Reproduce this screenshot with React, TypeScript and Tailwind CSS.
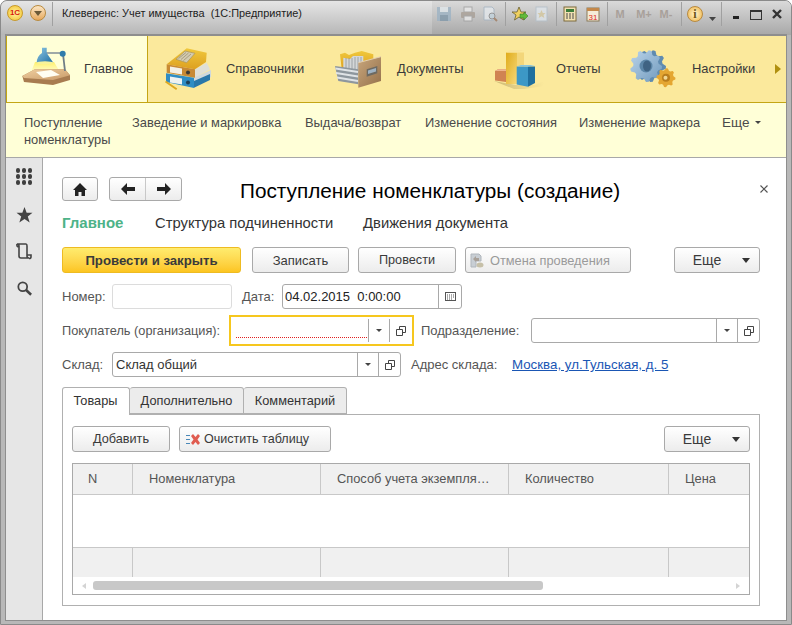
import React from "react";

const Gradients = () => (
  <svg width="0" height="0" className="absolute">
    <defs>
      <linearGradient id="wood" x1="0" y1="0" x2="1" y2="1"><stop offset="0" stopColor="#f0cfa0" /><stop offset="1" stopColor="#c89a68" /></linearGradient>
      <linearGradient id="blueg" x1="0" y1="0" x2="1" y2="1"><stop offset="0" stopColor="#8fc8e4" /><stop offset="1" stopColor="#1f6ea3" /></linearGradient>
      <linearGradient id="yellowg" x1="0" y1="0" x2="0" y2="1"><stop offset="0" stopColor="#f0c83c" /><stop offset="1" stopColor="#dda020" /></linearGradient>
      <linearGradient id="gold2" x1="0" y1="0" x2="1" y2="1"><stop offset="0" stopColor="#e0ac1c" /><stop offset="1" stopColor="#f6d878" /></linearGradient>
      <linearGradient id="steel" x1="0" y1="0" x2="1" y2="1"><stop offset="0" stopColor="#bcd5ea" /><stop offset="1" stopColor="#6f99bd" /></linearGradient>
      <linearGradient id="cone" x1="0" y1="0" x2="0" y2="1"><stop offset="0" stopColor="#ffef60" stopOpacity=".95" /><stop offset="1" stopColor="#fffbd0" stopOpacity=".4" /></linearGradient>
      <linearGradient id="cab" x1="0" y1="0" x2="1" y2="1"><stop offset="0" stopColor="#c8a67c" /><stop offset="1" stopColor="#94704a" /></linearGradient>
      <linearGradient id="shade" x1="0" y1="0" x2="1" y2="0"><stop offset="0" stopColor="#a08c50" stopOpacity=".5" /><stop offset="1" stopColor="#a08c50" stopOpacity="0" /></linearGradient>
    </defs>
  </svg>
);

const LampIcon = () => (
  <svg width="50" height="48" viewBox="0 0 50 48" className="shrink-0">
    <path d="M13 17H32L38 27L8 30Z" fill="url(#cone)" />
    <path d="M0.300 31L13 24.300H43L48 30.300V35L31 40L2 37Z" fill="#a87c50" />
    <path d="M0.300 31L13 24.300H43L48 30.300L31 35L2 33Z" fill="url(#wood)" />
    <path d="M14 27L29 25L38 30L21 33Z" fill="#fffef2" />
    <path d="M22 8H39.700" stroke="#7f8d97" strokeWidth="1.600" />
    <path d="M41 9L43 26" stroke="#6f7d86" strokeWidth="1.800" />
    <circle cx="40.700" cy="8.700" r="3" fill="#2f7cab" />
    <path d="M20 2.700H24.700V8L31.300 17.700H14.700Q15 11 20 8Z" fill="url(#blueg)" />
    <ellipse cx="23" cy="17.700" rx="8.500" ry="1.500" fill="#f8f29a" />
  </svg>
);

const BindersIcon = () => (
  <svg width="50" height="48" viewBox="0 0 50 48" className="shrink-0">
    <path d="M30 24.300L41.700 17.700L45 24.300L30 32.700Z" fill="#dfdfd6" />
    <path d="M29 32.700L46 25V32L29 42.700Z" fill="#cfd8dc" />
    <path d="M29 36L45 29V35L29 42.700Z" fill="#2a78aa" />
    <path d="M1.700 19.300L21.700 3.300L41.700 7.700L41 17L30 24.300Z" fill="url(#yellowg)" />
    <path d="M11 14.300L20 6L30 8.300L21.700 17.700Z" fill="#d3cbb0" stroke="#a8945c" strokeWidth=".7" />
    <path d="M13.500 13.500L21 7.500M16 14.500L23.500 8M18.500 15.500L26 9" stroke="#96896a" strokeWidth=".7" />
    <path d="M1.700 19.300L30 24.300V32.700L1.700 27.700Z" fill="#c88a34" />
    <path d="M5 21.500L17 23.600V29.600L5 27.500Z" fill="#f3f0e6" />
    <circle cx="23" cy="27.500" r="2" fill="#3d3a34" />
    <path d="M1 28.300L29 32.700V43L1 37Z" fill="#2f8dc4" />
    <path d="M5 31.500L17 33.600V39.600L5 37.500Z" fill="#eef2f2" />
    <circle cx="23" cy="37.500" r="2" fill="#1d3f58" />
    <path d="M0.500 36.500L11.700 44.300" stroke="#dda81f" strokeWidth="2" />
  </svg>
);

const CabinetIcon = () => (
  <svg width="50" height="48" viewBox="0 0 50 48" className="shrink-0">
    <path d="M5 9.300L10 7.700L14 10L20 7.700L26.700 6L38.300 9.300V18L6.700 24Z" fill="url(#yellowg)" />
    <path d="M8.300 12.700L15 14L18 11L28.300 11V28H8.300Z" fill="#d4d7d8" />
    <path d="M11 13V28M14 13V28M17 13V28M20 12V28M23 12V28M26 12V28" stroke="#8f969b" strokeWidth=".8" />
    <path d="M0 21L23.300 24.300V39.300L3.300 36Z" fill="#8e979e" />
    <path d="M0.500 23.500L23 27M1 28L23 31.500M2 32.500L23 36" stroke="#dfe3e6" strokeWidth="1.800" />
    <path d="M23.300 17.700L46 11.700V36L23.300 42.700Z" fill="url(#cab)" />
    <path d="M23.300 17.700L46 11.700" stroke="#e4cfae" />
    <path d="M31.700 24.300L42.300 21V28.300L31.700 31.700Z" fill="#6d6a62" />
    <path d="M33 25.500L41 23V26.500L33 29Z" fill="#9fb2c2" />
  </svg>
);

const ChartIcon = () => (
  <svg width="50" height="48" viewBox="0 0 50 48" className="shrink-0">
    <path d="M0 36L22 40H41L50 36V41L30 44H20Z" fill="url(#shade)" />
    <path d="M1 26L4 24.300H12V37L1 35.500Z" fill="#d08352" />
    <path d="M1 26L4 24.300H12V26Z" fill="#eeb58d" />
    <path d="M23 7.500H30V36L23 39Z" fill="#f3d67a" />
    <path d="M12 7.500H23V39H12Z" fill="url(#gold2)" />
    <path d="M12 7.500L16 5H30L23 7.500Z" fill="#f9e39a" />
    <path d="M34 21.500H41V38L34 41.700Z" fill="#1f6f9e" />
    <path d="M22.700 21.500H34V41.700L22.700 39.500Z" fill="#3c98c6" />
    <path d="M22.700 21.500L27 20H41L34 21.500Z" fill="#86c6e2" />
  </svg>
);

const gearPath = (cx: number, cy: number, r: number, teeth: number) => {
  let d = "";
  for (let i = 0; i < teeth * 4; i++) {
    const a = (i / (teeth * 4)) * Math.PI * 2;
    const rr = i % 4 < 2 ? r : r * 0.8;
    d += `${i === 0 ? "M" : "L"}${(cx + Math.cos(a) * rr).toFixed(1)} ${(cy + Math.sin(a) * rr).toFixed(1)} `;
  }
  return d + "Z";
};

const GearsIcon = () => (
  <svg width="50" height="48" viewBox="0 0 50 48" className="shrink-0">
    <path d={gearPath(20, 21, 16, 9)} fill="#5f8bb0" />
    <path d={gearPath(16, 21, 16, 9)} fill="url(#steel)" />
    <circle cx="16" cy="21" r="6.500" fill="#5c86a8" />
    <ellipse cx="17" cy="21" rx="4" ry="5.500" fill="#3f6383" />
    <path d={gearPath(36, 32.700, 9.500, 8)} fill="#e4a632" />
    <circle cx="36" cy="32.700" r="4" fill="#b97e1d" />
    <circle cx="35.500" cy="32.700" r="2" fill="#f1d793" />
  </svg>
);

const RibbonTab = ({ w, pl, label, icon, active, lx }: { w: string; pl: string; label: string; icon: React.ReactNode; active?: boolean; lx: string }) => (
  <div className={`${w} ${pl} h-full flex items-center shrink-0 ${active ? "bg-[#ffffd7] border-r border-l border-[#c4a614]" : ""}`}>
    {icon}
    <span className={`${lx} text-[12.9px] text-[#3a3a3a] whitespace-nowrap`}>{label}</span>
  </div>
);

const Caret = () => (
  <svg width="8" height="5" viewBox="0 0 8 5" className="shrink-0"><path d="M0 0H8L4 5Z" fill="#333" /></svg>
);

const SmallCaret = () => (
  <svg width="6" height="3" viewBox="0 0 6 3" className="shrink-0"><path d="M0 0H6L3 3Z" fill="#444" /></svg>
);

const OpenIcon = () => (
  <svg width="10" height="10" viewBox="0 0 10 10" className="shrink-0">
    <path d="M3.500 3V.5H9.500V6.500H6.500M.5 3.500H6.500V9.500H.5Z" fill="none" stroke="#444" />
  </svg>
);

const Btn = ({ w, children, primary, cls = "" }: { w: string; children: React.ReactNode; primary?: boolean; cls?: string }) => (
  <div
    className={`${w} h-[26px] shrink-0 rounded-[3px] flex items-center justify-center pt-px ${
      primary
        ? "border border-[#eebb22] bg-gradient-to-b from-[#ffec6e] to-[#fcc51f] font-bold text-[#3a3a3a] text-[13.2px]"
        : "border border-[#a9a9a9] bg-gradient-to-b from-[#ffffff] to-[#ececec] text-[#3a3a3a] text-[12.7px]"
    } ${cls}`}
  >
    {children}
  </div>
);

const Label = ({ children, cls = "" }: { children: React.ReactNode; cls?: string }) => (
  <span className={`text-[13px] text-[#555] whitespace-nowrap ${cls}`}>{children}</span>
);

const FieldBtns = ({ b = "w-[22px]" }: { b?: string }) => (
  <>
    <div className="w-[21px] h-full border-l border-[#a9a9a9] flex items-center justify-center shrink-0"><SmallCaret /></div>
    <div className={`${b} h-full border-l border-[#a9a9a9] flex items-center justify-center shrink-0`}><OpenIcon /></div>
  </>
);

const ChromeIcon = ({ children, cls = "" }: { children: React.ReactNode; cls?: string }) => (
  <svg width="16" height="18" viewBox="0 0 16 16" className={`shrink-0 ${cls}`}>{children}</svg>
);

const Sep = ({ cls = "" }: { cls?: string }) => <div className={`w-px h-[24px] bg-[#a0a0a0] shrink-0 ${cls}`} />;

const TitleBar = () => (
  <div className="h-[34px] flex items-start bg-gradient-to-b from-[#e6e6e6] to-[#b6b6b6] shrink-0 pl-[6px] pt-[4px] rounded-t-[5px]">
    <div className="w-[16px] h-[16px] rounded-full bg-[radial-gradient(circle,#fff3a0,#f2c02c)] border border-[#c89a2a] flex items-center justify-center text-[8px] leading-none font-bold text-[#d8180c]">1С</div>
    <div className="ml-[7px] w-[16px] h-[16px] rounded-full bg-gradient-to-b from-[#fbe6c4] to-[#e6a95c] border border-[#b98a3e] flex items-center justify-center"><svg width="8" height="5" viewBox="0 0 8 5"><path d="M0 0H8L4 5Z" fill="#6b5a38" /></svg></div>
    <Sep cls="ml-[6px] -mt-[3px]" />
    <span className="ml-[9px] text-[10.9px] leading-[16px] text-[#222] whitespace-pre">Клеверенс: Учет имущества  (1С:Предприятие)</span>
    <div className="ml-auto -mt-[4px] w-[359px] h-[34px] pt-[4px] flex items-start bg-gradient-to-b from-[#dadada] to-[#a8a8a8] rounded-tr-[5px] pl-[4px]">
      <ChromeIcon cls="opacity-80"><path d="M1 1H15V15H1Z" fill="#9db3c4" /><rect x="4" y="1" width="8" height="5" fill="#dfe6ea" /><rect x="4" y="9" width="8" height="6" fill="#7f97a9" /></ChromeIcon>
      <ChromeIcon cls="ml-[8px] opacity-80"><rect x="4" y="1" width="8" height="5" fill="#e8e8e8" stroke="#a0a0a0" /><rect x="1" y="6" width="14" height="6" rx="1" fill="#a89f96" /><rect x="4" y="10" width="8" height="5" fill="#e8e8e8" stroke="#a0a0a0" /></ChromeIcon>
      <ChromeIcon cls="ml-[6px] opacity-80"><path d="M2 1H10L12 3V14H2Z" fill="#e4e8ec" stroke="#a4b4c2" /><circle cx="10" cy="10" r="3" fill="#c3d4de" stroke="#8a8a8a" /><path d="M12 12L15 15" stroke="#a07c60" strokeWidth="2" /></ChromeIcon>
      <Sep cls="ml-[7px] -mt-[3px]" />
      <ChromeIcon cls="ml-[6px]"><path d="M7 1L9 6H14L10 9L11.500 14L7 11L2.500 14L4 9L0 6H5Z" fill="#f0d060" stroke="#6a6030" strokeWidth=".8" /><path d="M8 8H12V6L16 10L12 14V12H8Z" fill="#62b93a" stroke="#2f7a1a" strokeWidth=".5" /></ChromeIcon>
      <ChromeIcon cls="ml-[6px] opacity-80"><rect x="2" y="1" width="11" height="14" fill="#dfe5ea" stroke="#b4c0ca" /><path d="M7.500 4L8.800 7H11.500L9.500 9L10.300 12L7.500 10.300L4.700 12L5.500 9L3.500 7H6.200Z" fill="#d6c9a0" /></ChromeIcon>
      <Sep cls="ml-[6px] -mt-[3px]" />
      <ChromeIcon cls="ml-[5px]"><rect x="2" y="1" width="12" height="14" fill="#f1e1b2" stroke="#7c6a3c" /><rect x="4" y="3" width="8" height="3" fill="#3d7d3a" /><path d="M4 8H6M7 8H9M10 8H12M4 10H6M7 10H9M10 10H12M4 12H6M7 12H9M10 12H12" stroke="#4a4a4a" /></ChromeIcon>
      <ChromeIcon cls="ml-[7px]"><rect x="2" y="2" width="12" height="13" fill="#f5ecd8" stroke="#8a7a58" /><rect x="2" y="2" width="12" height="3" fill="#c4884a" /><text x="8" y="13.500" textAnchor="middle" fontSize="8" fontFamily="Liberation Sans" fill="#e02c1c">31</text></ChromeIcon>
      <Sep cls="ml-[6px] -mt-[3px]" />
      <div className="flex items-center h-[18px] text-[11px] font-bold text-[#a8a09a]">
        <span className="ml-[6px] w-[12px] text-center">M</span>
        <span className="ml-[9px] w-[18px] text-center">M+</span>
        <span className="ml-[4px] w-[18px] text-center">M-</span>
      </div>
      <Sep cls="ml-[6px] -mt-[3px]" />
      <div className="ml-[5px] mt-[1px] w-[16px] h-[16px] rounded-full bg-[radial-gradient(circle,#fff6d0,#eeb040)] border border-[#b88a40] flex items-center justify-center text-[12px] font-bold text-[#6a5416] font-['Liberation_Serif']">i</div>
      <div className="ml-[6px] mt-[12px]"><svg width="7" height="4" viewBox="0 0 7 4"><path d="M0 0H7L3.500 4Z" fill="#444" /></svg></div>
      <Sep cls="ml-[5px] -mt-[3px]" />
      <div className="ml-[11px] mt-[11px] w-[6px] h-[3px] bg-[#222]" />
      <div className="ml-[11px] mt-[5px] w-[12px] h-[10px] border border-[#333] border-t-2" />
      <svg width="10" height="10" viewBox="0 0 10 10" className="ml-[10px] mt-[4px]"><path d="M1 1L9 9M9 1L1 9" stroke="#333" strokeWidth="2.400" /></svg>
    </div>
  </div>
);

const Ribbon = () => (
  <div className="h-[68px] shrink-0 flex items-stretch bg-[#fbe99c] border-t border-b border-[#c4a614] border-t-[#8e8e8e]">
    <RibbonTab w="w-[142px]" pl="pl-[15px]" active icon={<LampIcon />} label="Главное" lx="ml-[12px]" />
    <RibbonTab w="w-[170px]" pl="pl-[17px]" icon={<BindersIcon />} label="Справочники" lx="ml-[11px]" />
    <RibbonTab w="w-[159px]" pl="pl-[17px]" icon={<CabinetIcon />} label="Документы" lx="ml-[12px]" />
    <RibbonTab w="w-[136px]" pl="pl-[17px]" icon={<ChartIcon />} label="Отчеты" lx="ml-[12px]" />
    <RibbonTab w="w-[145px]" pl="pl-[17px]" icon={<GearsIcon />} label="Настройки" lx="ml-[12px]" />
    <div className="flex items-center ml-[17px]"><svg width="6" height="10" viewBox="0 0 6 10"><path d="M0 0L6 5L0 10Z" fill="#b09010" /></svg></div>
  </div>
);

const SubNav = () => {
  const items: [string, string][] = [
    ["w-[108px]", "Поступление номенклатуры"],
    ["w-[173px]", "Заведение и маркировка"],
    ["w-[120px]", "Выдача/возврат"],
    ["w-[154px]", "Изменение состояния"],
    ["w-[143px]", "Изменение маркера"],
  ];
  return (
    <div className="h-[55px] shrink-0 bg-[#ffffd7] border-b border-[#a8a8a8] flex pl-[18px] pt-[11px] text-[12.9px] leading-[17px] text-[#4a4a4a]">
      {items.map(([w, t]) => (
        <div key={t} className={`${w} shrink-0 pr-[20px]`}>{t}</div>
      ))}
      <div className="flex items-center h-[17px] gap-[6px] text-[13.5px]">Еще <SmallCaret /></div>
    </div>
  );
};

const Sidebar = () => (
  <div className="w-[37px] shrink-0 bg-[#e6e6e6] border-r border-[#a8a8a8] flex flex-col items-center pt-[10px]">
    <div className="grid grid-cols-3 gap-[1.500px] w-[17px]">
      {Array.from({ length: 9 }).map((_, i) => (
        <div key={i} className="w-[4.500px] h-[4.500px] rounded-full bg-[#3f3f3f]" />
      ))}
    </div>
    <svg width="17" height="16" viewBox="0 0 18 17" className="mt-[22px]"><path d="M9 0L11.300 6H17.500L12.500 10L14.500 16.500L9 12.700L3.500 16.500L5.500 10L.5 6H6.700Z" fill="#444" /></svg>
    <svg width="16" height="17" viewBox="0 0 16 17" className="mt-[20px]"><path d="M1 1H10Q11 1 11 3V13Q11 15 13 15H5Q3 15 3 13V3Q3 1 1 1ZM11 12H15V14Q15 15.500 13 15.500M1 1Q0.500 4 3 4" fill="none" stroke="#444" strokeWidth="1.600" /></svg>
    <svg width="15" height="15" viewBox="0 0 17 17" className="mt-[21px]"><circle cx="6.500" cy="6.500" r="5" fill="none" stroke="#444" strokeWidth="2" /><path d="M10 10L16 15.500" stroke="#444" strokeWidth="3" /></svg>
  </div>
);

const Arrow = ({ right }: { right?: boolean }) => (
  <svg width="14" height="12" viewBox="0 0 14 12" style={{ transform: right ? "scaleX(-1)" : undefined }}>
    <path d="M0 6L6 0V4H14V8H6V12Z" fill="#222" />
  </svg>
);

const Header = () => (
  <div className="h-[24px] flex items-center relative">
    <div className="w-[36px] h-[24px] rounded-[3px] border border-[#a9a9a9] bg-gradient-to-b from-white to-[#ececec] flex items-center justify-center">
      <svg width="14" height="13" viewBox="0 0 14 13"><path d="M7 0L14 7H12V13H8.500V9H5.500V13H2V7H0Z" fill="#222" /></svg>
    </div>
    <div className="ml-[11px] w-[73px] h-[24px] rounded-[3px] border border-[#a9a9a9] bg-gradient-to-b from-white to-[#ececec] flex items-center">
      <div className="w-[36px] h-full flex items-center justify-center border-r border-[#c8c8c8]"><Arrow /></div>
      <div className="flex-1 flex items-center justify-center"><Arrow right /></div>
    </div>
    <span className="ml-[58px] mt-[3px] text-[20.75px] leading-[24px] text-black whitespace-nowrap">Поступление номенклатуры (создание)</span>
    <svg width="8" height="8" viewBox="0 0 8 8" className="absolute right-[-8px] top-[8px]"><path d="M.5 .5L7.500 7.500M7.500 .5L.5 7.500" stroke="#555" strokeWidth="1.200" /></svg>
  </div>
);

const Main = () => (
  <div className="flex-1 bg-white pt-[19px] pl-[19px] pr-[26px] text-[13px] min-w-0">
    <Header />
    <div className="mt-[12px] h-[20px] flex items-center text-[14.8px] text-[#333]">
      <span className="font-bold text-[15px] text-[#4db388] w-[93px]">Главное</span>
      <span className="w-[208px]">Структура подчиненности</span>
      <span>Движения документа</span>
    </div>
    <div className="mt-[14px] flex">
      <Btn primary w="w-[179px]">Провести и закрыть</Btn>
      <Btn w="w-[97px]" cls="ml-[11px] !text-[13px]">Записать</Btn>
      <Btn w="w-[98px]" cls="ml-[9px]">Провести</Btn>
      <Btn w="w-[166px]" cls="ml-[9px] !text-[#9a9a9a] gap-[6px] !justify-start pl-[4px] !text-[12.8px]">
        <svg width="14" height="15" viewBox="0 0 14 15"><path d="M1 1H9L11 3V8H6V14H1Z" fill="#c8ced4" stroke="#b0b6bc" /><path d="M3 6L6 3V5H9V8H6V9Z" fill="#a8a098" /><ellipse cx="10" cy="12" rx="3.500" ry="2.500" fill="#c6c0a8" /></svg>
        Отмена проведения
      </Btn>
      <Btn w="w-[86px]" cls="ml-auto gap-[21px] pl-[9px] !pt-0 !text-[14px]">Еще <Caret /></Btn>
    </div>
    <div className="mt-[11px] h-[25px] flex items-center">
      <Label cls="w-[50px]">Номер:</Label>
      <div className="w-[120px] h-[25px] rounded-[3px] border border-[#dcdcdc]" />
      <Label cls="ml-[10px] w-[40px]">Дата:</Label>
      <div className="w-[180px] h-[25px] rounded-[3px] border border-[#a9a9a9] flex items-center">
        <span className="flex-1 pl-[2px] whitespace-pre text-[13px] text-[#222]">04.02.2015  0:00:00</span>
        <div className="w-[23px] h-full border-l border-[#a9a9a9] flex items-center justify-center">
          <svg width="11" height="9" viewBox="0 0 11 9"><rect x=".5" y=".5" width="10" height="8" fill="#fff" stroke="#555" /><path d="M2 3H3M4 3H5M6 3H7M8 3H9M2 5H3M4 5H5M6 5H7M8 5H9M2 7H3M4 7H5M6 7H7" stroke="#555" /></svg>
        </div>
      </div>
    </div>
    <div className="mt-[6px] h-[31px] flex items-center">
      <Label cls="w-[167px] !text-[12.75px]">Покупатель (организация):</Label>
      <div className="w-[185px] h-[31px] border-2 border-[#f6c71e] flex items-center py-[2px]">
        <div className="flex-1 h-full relative">
          <div className="absolute left-[5px] right-[1px] bottom-[4px] border-b border-dotted border-[#e02020]" />
        </div>
        <FieldBtns b="w-[23px]" />
      </div>
      <Label cls="ml-[7px] w-[110px]">Подразделение:</Label>
      <div className="w-[229px] h-[25px] rounded-[3px] border border-[#a9a9a9] flex items-center">
        <div className="flex-1" />
        <FieldBtns />
      </div>
    </div>
    <div className="mt-[6px] h-[25px] flex items-center">
      <Label cls="w-[50px]">Склад:</Label>
      <div className="w-[289px] h-[25px] rounded-[3px] border border-[#a9a9a9] flex items-center">
        <span className="flex-1 pl-[3px] text-[#333]">Склад общий</span>
        <FieldBtns />
      </div>
      <Label cls="ml-[10px] w-[101px]">Адрес склада:</Label>
      <span className="text-[13.3px] text-[#1a56b4] underline whitespace-nowrap pt-px">Москва, ул.Тульская, д. 5</span>
    </div>
    <div className="mt-[10px] h-[28px] flex items-end text-[12.75px] text-[#333] relative z-10">
      <div className="w-[68px] h-[28px] rounded-t-[3px] border border-b-0 border-[#b0b0b0] bg-white flex items-center justify-center pr-px pb-[2px]">Товары</div>
      <div className="w-[114px] h-[27px] mb-px rounded-t-[3px] border border-l-0 border-[#b0b0b0] bg-[#ececec] flex items-center justify-center">Дополнительно</div>
      <div className="w-[103px] h-[27px] mb-px rounded-t-[3px] border border-l-0 border-[#b0b0b0] bg-[#ececec] flex items-center justify-center">Комментарий</div>
    </div>
    <div className="-mt-px h-[192px] border border-[#b0b0b0] pt-[11px] px-[9px]">
      <div className="flex">
        <Btn w="w-[98px]">Добавить</Btn>
        <Btn w="w-[152px]" cls="ml-[9px] gap-[3px] !justify-start pl-[6px] !text-[12.55px]">
          <svg width="15" height="11" viewBox="0 0 15 11"><path d="M0 1.500H4M0 5.500H4M0 9.500H4" stroke="#4a88b8" /><path d="M5 2L7 0L9.500 3L12 0L14 2L11.500 5.500L14 9L12 11L9.500 8L7 11L5 9L7.500 5.500Z" fill="#e05c50" /></svg>
          Очистить таблицу
        </Btn>
        <Btn w="w-[86px]" cls="ml-auto gap-[21px] pl-[9px] !pt-0 !text-[14px]">Еще <Caret /></Btn>
      </div>
      <div className="mt-[11px] h-[132px] border border-[#a9a9a9] flex flex-col text-[12.85px]">
        <div className="h-[31px] shrink-0 flex bg-[#f0f0f0] border-b border-[#c8c8c8] text-[#555]">
          <div className="w-[60px] border-r border-[#c8c8c8] pl-[15px] flex items-center">N</div>
          <div className="w-[188px] border-r border-[#c8c8c8] pl-[16px] flex items-center">Номенклатура</div>
          <div className="w-[188px] border-r border-[#c8c8c8] pl-[16px] flex items-center">Способ учета экземпля…</div>
          <div className="w-[160px] border-r border-[#c8c8c8] pl-[16px] flex items-center">Количество</div>
          <div className="flex-1 pl-[16px] flex items-center">Цена</div>
        </div>
        <div className="h-[53px] shrink-0 border-b border-[#c8c8c8] bg-white" />
        <div className="h-[29px] shrink-0 flex bg-[#f0f0f0]">
          <div className="w-[60px] border-r border-[#c8c8c8]" />
          <div className="w-[188px] border-r border-[#c8c8c8]" />
          <div className="w-[188px] border-r border-[#c8c8c8]" />
          <div className="w-[160px] border-r border-[#c8c8c8]" />
        </div>
        <div className="flex-1 flex items-center">
          <svg width="4" height="6" viewBox="0 0 4 6" className="ml-[9px]"><path d="M4 0L0 3L4 6Z" fill="#d4d4d4" /></svg>
          <div className="ml-[7px] w-[450px] h-[9px] rounded-[3px] bg-[#c8c8c8]" />
          <svg width="4" height="6" viewBox="0 0 4 6" className="ml-auto mr-[9px]"><path d="M0 0L4 3L0 6Z" fill="#d4d4d4" /></svg>
        </div>
      </div>
    </div>
  </div>
);

export default function App() {
  return (
    <div className="w-[792px] h-[625px] overflow-hidden relative bg-[#b8b8b8] border border-[#8a8a8a] rounded-t-[7px] font-['Liberation_Sans','Arial',sans-serif]">
      <Gradients />
      <div className="h-full flex flex-col">
        <TitleBar />
        <div className="mx-[5px] flex flex-col h-[585px] shadow-[0_0_0_1px_#8e8e8e]">
          <Ribbon />
          <SubNav />
          <div className="flex flex-1 min-h-0">
            <Sidebar />
            <Main />
          </div>
        </div>
      </div>
    </div>
  );
}
